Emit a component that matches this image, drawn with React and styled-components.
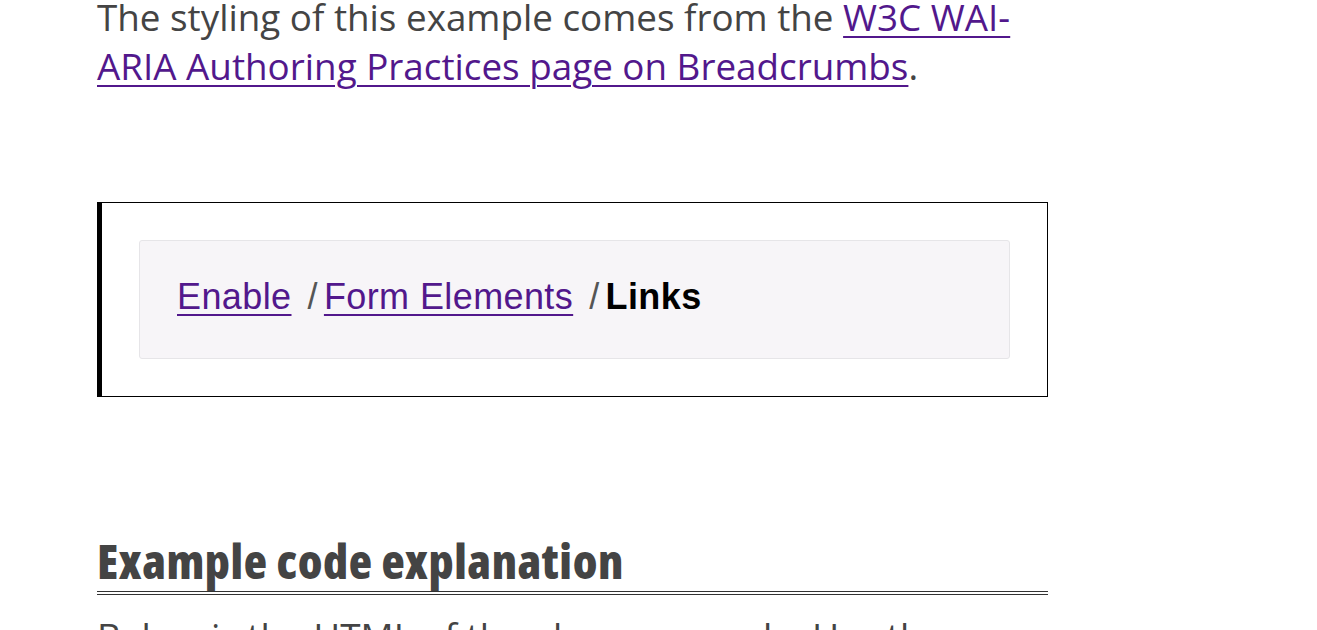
import React from "react";
import styled, { createGlobalStyle } from "styled-components";

const GlobalStyle = createGlobalStyle`
  body {
    margin: 0;
    background: #fff;
    font-family: "Open Sans", "Liberation Sans", sans-serif;
    color: #444;
    overflow: hidden;
  }
`;

const Page = styled.main`
  width: 951px;
  padding-left: 97px;
`;

const Para = styled.p`
  margin: ${(p) => p.$top || "0"} 0 0;
  font-size: 36.8px;
  line-height: 49px;
`;

const Link = styled.a`
  color: #52188c;
  text-decoration: underline;
  text-decoration-thickness: 2px;
  text-underline-offset: 5px;
`;

const Example = styled.div`
  margin-top: 111px;
  border: 1px solid #000;
  border-left: 5px solid #000;
  padding: 37px;
`;

const Crumbs = styled.nav`
  background: #f7f5f8;
  border: 1px solid #e6e5e8;
  border-radius: 3px;
  padding: 30px 37px 35px;
  font-family: "Liberation Sans", Arial, sans-serif;
  font-size: 36px;
  letter-spacing: 0.4px;
  line-height: 52px;
`;

const CrumbList = styled.ol`
  margin: 0;
  padding: 0;
  list-style: none;
  display: flex;
  align-items: baseline;
`;

const Crumb = styled.li`
  display: inline;
  & + &::before {
    content: "/";
    color: #555;
    margin: 0 6px 0 16px;
  }
`;

const CrumbLink = styled.a`
  color: #52188c;
  text-decoration: underline;
  text-decoration-thickness: 2px;
  text-underline-offset: 5px;
`;

const Current = styled.span`
  color: #000;
  font-weight: 700;
`;

const Heading = styled.h2`
  margin: 133px 0 0;
  font-size: 48px;
  line-height: 57.6px;
  font-weight: 800;
  font-stretch: 87.5%;
  letter-spacing: 0.55px;
  color: #444;
  padding: 2px 0 1px;
  border-bottom: 4px double #333;
`;

export default function App() {
  return (
    <Page>
      <GlobalStyle />
      <Para $top="-7px">
        The styling of this example comes from the{" "}
        <Link href="#">W3C WAI-ARIA Authoring Practices page on Breadcrumbs</Link>.
      </Para>
      <Example>
        <Crumbs aria-label="Breadcrumb">
          <CrumbList>
            <Crumb>
              <CrumbLink href="#">Enable</CrumbLink>
            </Crumb>
            <Crumb>
              <CrumbLink href="#">Form Elements</CrumbLink>
            </Crumb>
            <Crumb>
              <Current aria-current="page">Links</Current>
            </Crumb>
          </CrumbList>
        </Crumbs>
      </Example>
      <Heading>Example code explanation</Heading>
      <Para $top="17px">
        Below is the HTML of the above example. Use the
      </Para>
    </Page>
  );
}
